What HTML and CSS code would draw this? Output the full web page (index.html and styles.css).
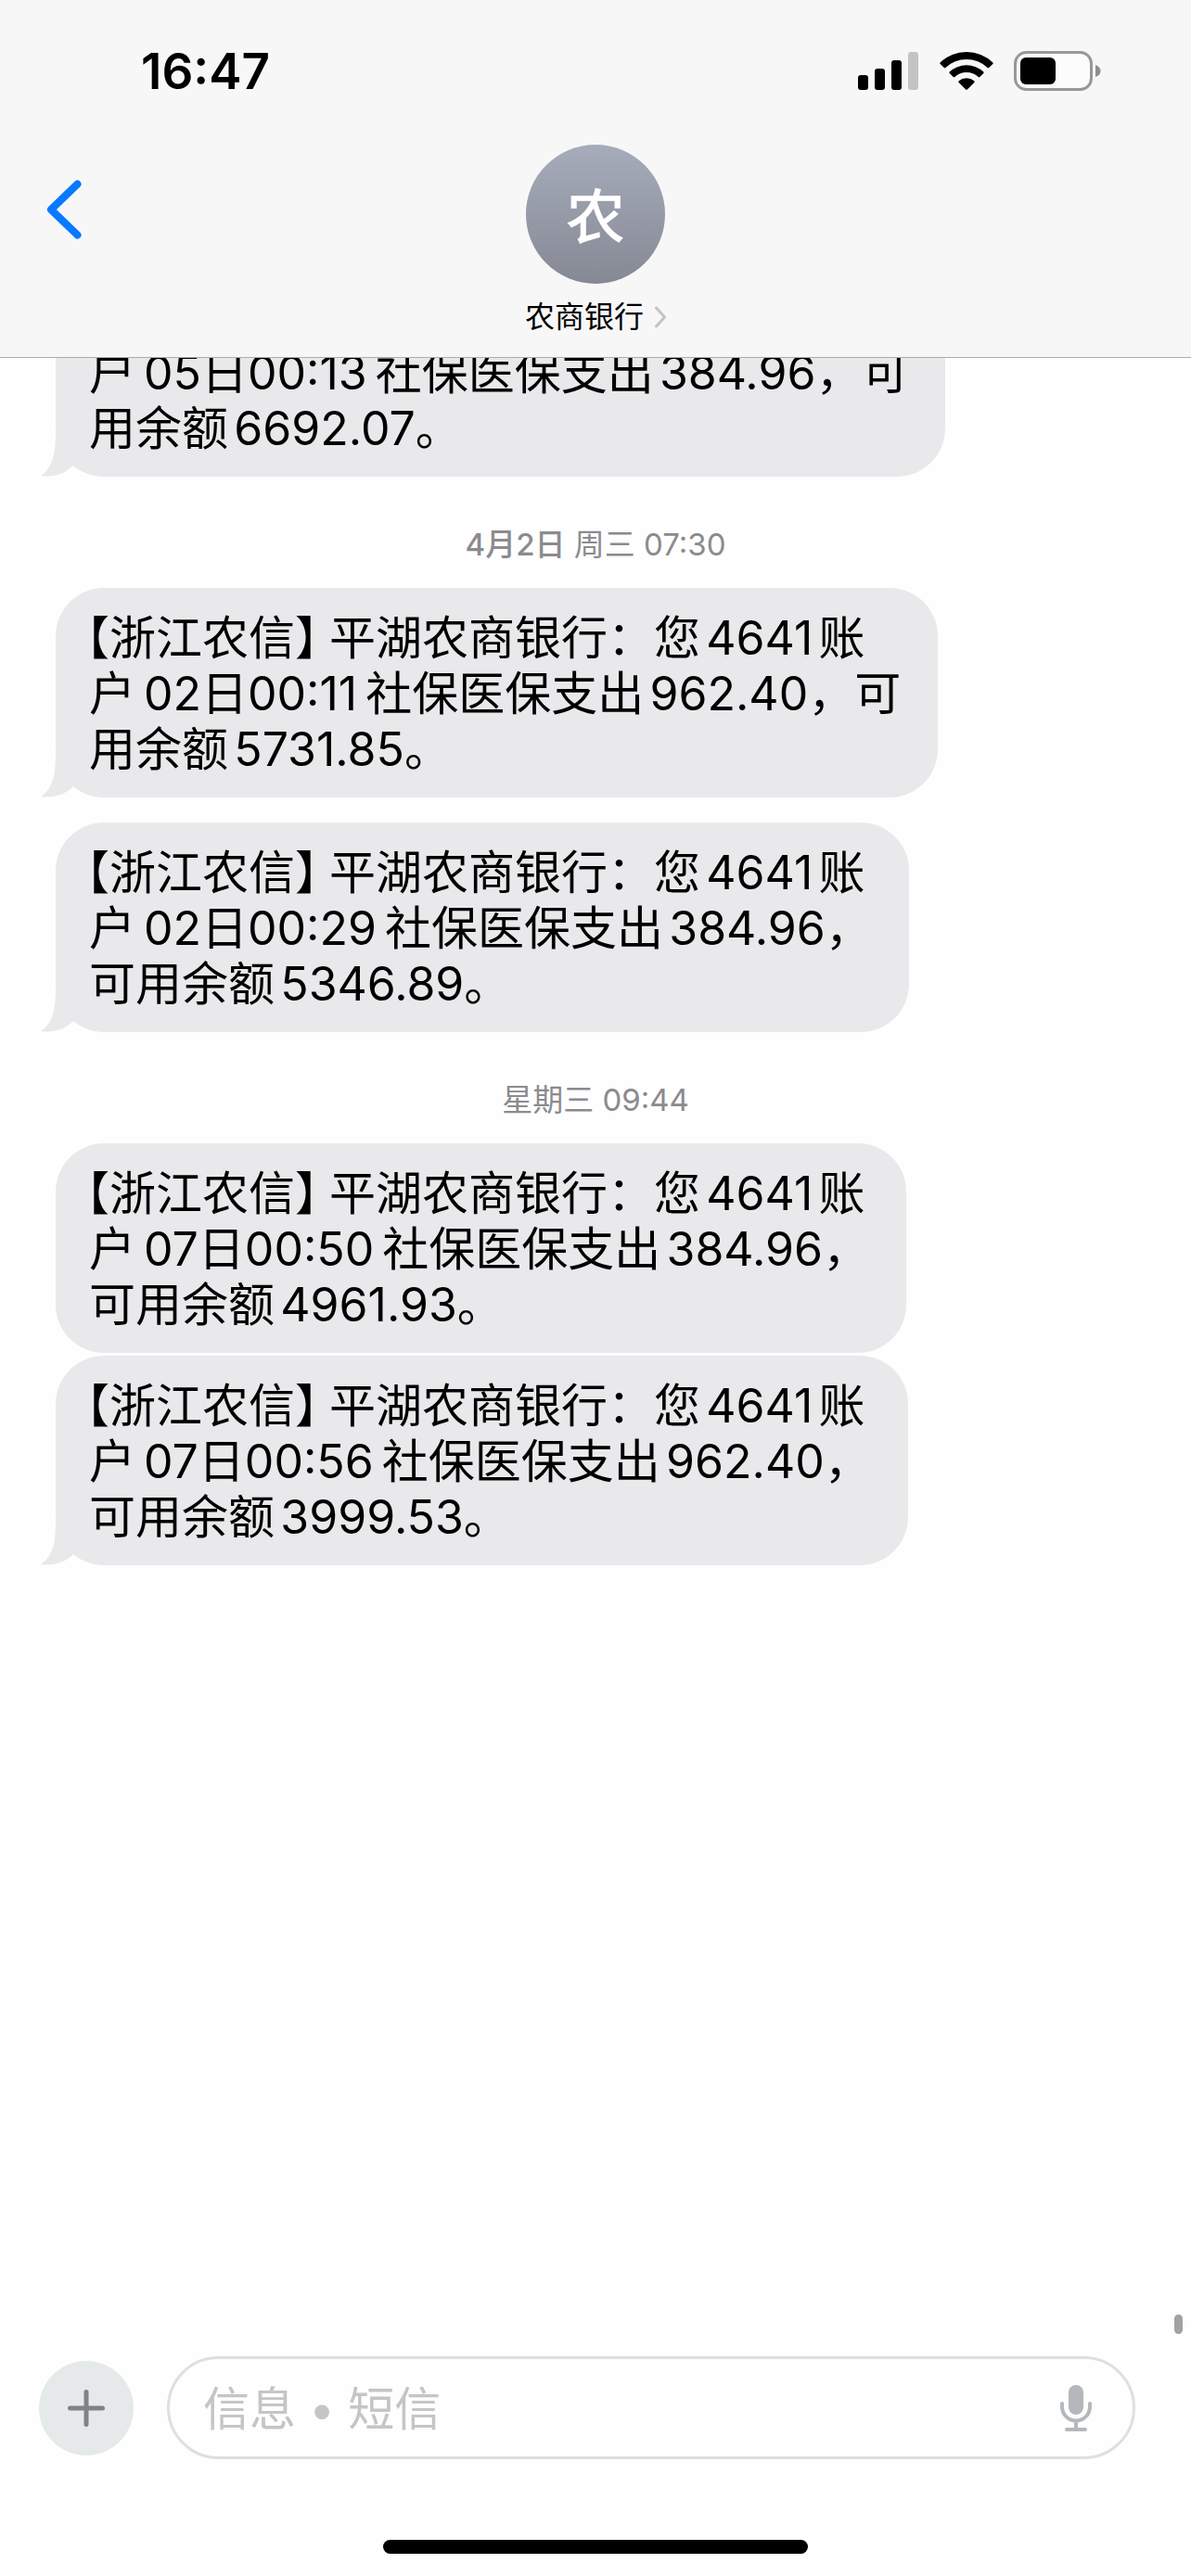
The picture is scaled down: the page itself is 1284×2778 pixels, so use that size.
FILE: index.html
```html
<!DOCTYPE html>
<html lang="zh-CN">
<head>
<meta charset="utf-8">
<meta name="viewport" content="width=device-width, initial-scale=1">
<title>农商银行</title>
<link rel="stylesheet" href="styles.css">
</head>
<body>
<header class="header">
  <div class="status">
    <time class="clock">16:47</time>
    <div class="indicators">
      <svg class="signal" width="66" height="42" viewBox="0 0 66 42" aria-hidden="true">
        <rect x="0" y="26" width="11" height="16" rx="3"/>
        <rect x="18" y="19" width="11" height="23" rx="3"/>
        <rect x="36" y="10" width="11" height="32" rx="3"/>
        <rect x="54" y="1" width="11" height="41" rx="3" fill="#c4c4c5"/>
      </svg>
      <svg class="wifi" width="58" height="42" viewBox="0 0 58 42" aria-hidden="true">
        <path d="M0.600 12.500A41 41 0 0 1 57.400 12.500Q58 13.200 57.300 14L53.200 18Q52.400 18.700 51.600 18A33 33 0 0 0 6.400 18Q5.600 18.700 4.800 18L0.700 14Q0 13.200 0.600 12.500Z"/>
        <path d="M10.600 22.500A27 27 0 0 1 47.400 22.500Q48 23.300 47.300 24L43.300 28Q42.500 28.700 41.700 28A18.500 18.500 0 0 0 16.300 28Q15.500 28.700 14.700 28L10.700 24Q10 23.300 10.600 22.500Z"/>
        <path d="M20.700 32.300A13 13 0 0 1 37.300 32.300Q38 33.200 37.300 34L29.800 41.500Q29 42.200 28.200 41.500L20.700 34Q20 33.200 20.700 32.300Z"/>
      </svg>
      <svg class="battery" width="94" height="43" viewBox="0 0 94 43" aria-hidden="true">
        <rect x="1.500" y="1.500" width="82" height="40" rx="12" fill="#fcfcfc" stroke="#98989a" stroke-width="3"/>
        <rect x="7" y="7" width="38" height="29" rx="6"/>
        <path d="M88 15Q93.500 17 93.500 21.500T88 28Z" fill="#8e8e90"/>
      </svg>
    </div>
  </div>
  <nav class="nav">
    <button class="back" type="button" aria-label="返回">
      <svg width="38" height="64" viewBox="0 0 38 64" aria-hidden="true"><path d="M33.500 4.500L5 32L33.500 59.500"/></svg>
    </button>
    <button class="contact" type="button">
      <span class="avatar">农</span>
      <span class="name">农商银行
        <svg width="12" height="24" viewBox="0 0 12 24" aria-hidden="true"><path d="M1.500 2L10.500 12L1.500 22"/></svg>
      </span>
    </button>
  </nav>
</header>

<main class="thread">
  <p class="bubble tail clipped">户<span class="when">05日00:13</span>社保医保支出384.96，可<br>用余额6692.07。</p>
  <p class="stamp"><time><b>4月2日</b> 周三 07:30</time></p>
  <p class="bubble tail"><span class="sender">【浙江农信】</span>平湖农商银行：您4641账<br>户<span class="when">02日00:11</span>社保医保支出962.40，可<br>用余额5731.85。</p>
  <p class="bubble tail spaced"><span class="sender">【浙江农信】</span>平湖农商银行：您4641账<br>户<span class="when">02日00:29</span>社保医保支出384.96，<br>可用余额5346.89。</p>
  <p class="stamp"><time>星期三 09:44</time></p>
  <p class="bubble"><span class="sender">【浙江农信】</span>平湖农商银行：您4641账<br>户<span class="when">07日00:50</span>社保医保支出384.96，<br>可用余额4961.93。</p>
  <p class="bubble tail stacked"><span class="sender">【浙江农信】</span>平湖农商银行：您4641账<br>户<span class="when">07日00:56</span>社保医保支出962.40，<br>可用余额3999.53。</p>
  <span class="thumb"></span>
</main>

<footer class="footer">
  <form class="composer">
    <button class="add" type="button" aria-label="添加">
      <svg width="40" height="40" viewBox="0 0 40 40" aria-hidden="true"><path d="M20 2.500V37.500M2.500 20H37.500"/></svg>
    </button>
    <div class="field">
      <input class="input" type="text" placeholder="信息 • 短信" aria-label="信息">
      <button class="mic" type="button" aria-label="听写">
        <svg width="36" height="52" viewBox="0 0 36 52" aria-hidden="true">
          <rect x="10" y="1" width="16" height="32" rx="8" fill="#b4b8bd"/>
          <path d="M3 21V24.500A15 15 0 0 0 33 24.500V21M18 40V48M8 49H28"/>
        </svg>
      </button>
    </div>
  </form>
  <div class="home"></div>
</footer>
</body>
</html>
```
FILE: styles.css
```css
* {
  box-sizing: border-box;
}

body {
  display: flex;
  flex-direction: column;
  min-height: 100vh;
  margin: 0;
  background: #fefefe;
  color: #000;
  font-family: Inter, "Noto Sans CJK SC", sans-serif;
}

button {
  padding: 0;
  border: 0;
  background: none;
  color: inherit;
  font: inherit;
}

svg {
  display: block;
}

/* Header */
.header {
  position: relative;
  z-index: 1;
  border-bottom: 1px solid #adadaf;
  background: #f7f7f8;
}

.status {
  display: flex;
  align-items: center;
  justify-content: space-between;
  height: 152px;
  padding: 0 97px 0 152px;
}

.clock {
  padding-top: 2px;
  font-size: 53px;
  font-weight: 600;
  line-height: 60px;
}

.indicators {
  display: flex;
  align-items: center;
}

.wifi {
  margin: 0 22px;
}

.nav {
  display: grid;
  grid-template-columns: 1fr auto 1fr;
  align-items: start;
  padding: 4px 50px 23px;
}

.back {
  display: flex;
  align-items: center;
  width: 90px;
  height: 140px;
}

.back path {
  fill: none;
  stroke: #077aff;
  stroke-width: 8;
  stroke-linecap: round;
  stroke-linejoin: round;
}

.contact {
  display: flex;
  flex-direction: column;
  align-items: center;
  gap: 16px;
}

.avatar {
  display: grid;
  place-items: center;
  width: 150px;
  height: 150px;
  padding-top: 6px;
  border-radius: 50%;
  background: linear-gradient(#a6acba, #858994);
  color: #fff;
  font-size: 64px;
  font-weight: 500;
  line-height: 80px;
}

.name {
  display: flex;
  align-items: center;
  gap: 12px;
  font-size: 32px;
  line-height: 40px;
}

.name path {
  fill: none;
  stroke: #c3c3c6;
  stroke-width: 3;
  stroke-linecap: round;
  stroke-linejoin: round;
}

/* Messages */
.thread {
  position: relative;
  display: flex;
  flex: 1;
  flex-direction: column;
  align-items: flex-start;
  padding: 0 60px;
}

.bubble {
  position: relative;
  margin: 0;
  padding: 24px 40px 22px 36px;
  border-radius: 52px;
  background: #e9e9eb;
  font-size: 50px;
  line-height: 60px;
  text-autospace: normal;
  white-space: nowrap;
}

.clipped {
  margin-top: -14px;
  padding-top: 0;
  border-top-left-radius: 0;
  border-top-right-radius: 0;
}

.spaced {
  margin-top: 27px;
}

.stacked {
  margin-top: 3px;
}

.tail::after {
  content: "";
  position: absolute;
  bottom: 0;
  left: -16px;
  width: 44px;
  height: 48px;
  background: inherit;
  clip-path: path("M16 0C16 24 13 38 0 47C14 49 26 45 35 36L44 30V0Z");
}

.sender {
  margin: 0 12px 0 -3px;
  font-feature-settings: "halt";
}

.when {
  margin: 0 9px;
  text-autospace: no-autospace;
}

.stamp {
  align-self: center;
  margin: 0;
  padding: 53px 0 27px;
  color: #8b8b8e;
  font-size: 33px;
  line-height: 40px;
}

.stamp b {
  font-weight: 500;
}

.thumb {
  position: absolute;
  right: 9px;
  bottom: 0;
  width: 9px;
  height: 21px;
  border-radius: 5px;
  background: #a2a2a2;
}

/* Composer */
.footer {
  padding: 24px 0;
}

.composer {
  display: flex;
  align-items: center;
  gap: 36px;
  padding: 0 60px 0 42px;
}

.add {
  display: grid;
  flex: none;
  place-items: center;
  width: 102px;
  height: 102px;
  border-radius: 50%;
  background: #e5e9ea;
}

.add path {
  stroke: #7f8387;
  stroke-width: 5;
  stroke-linecap: round;
}

.field {
  display: flex;
  flex: 1;
  align-items: center;
  height: 111px;
  padding: 0 43px 0 36px;
  border: 3px solid #dfdfe0;
  border-radius: 56px;
}

.input {
  flex: 1;
  min-width: 0;
  padding: 2px 0 0;
  border: 0;
  outline: 0;
  background: none;
  color: #000;
  font: inherit;
  font-size: 50px;
  line-height: 60px;
}

.input::placeholder {
  color: #c5c5c7;
}

.mic path {
  fill: none;
  stroke: #b4b8bd;
  stroke-width: 4;
  stroke-linecap: round;
}

.home {
  width: 458px;
  height: 15px;
  margin: 87px auto 0;
  border-radius: 8px;
  background: #000;
}
```
